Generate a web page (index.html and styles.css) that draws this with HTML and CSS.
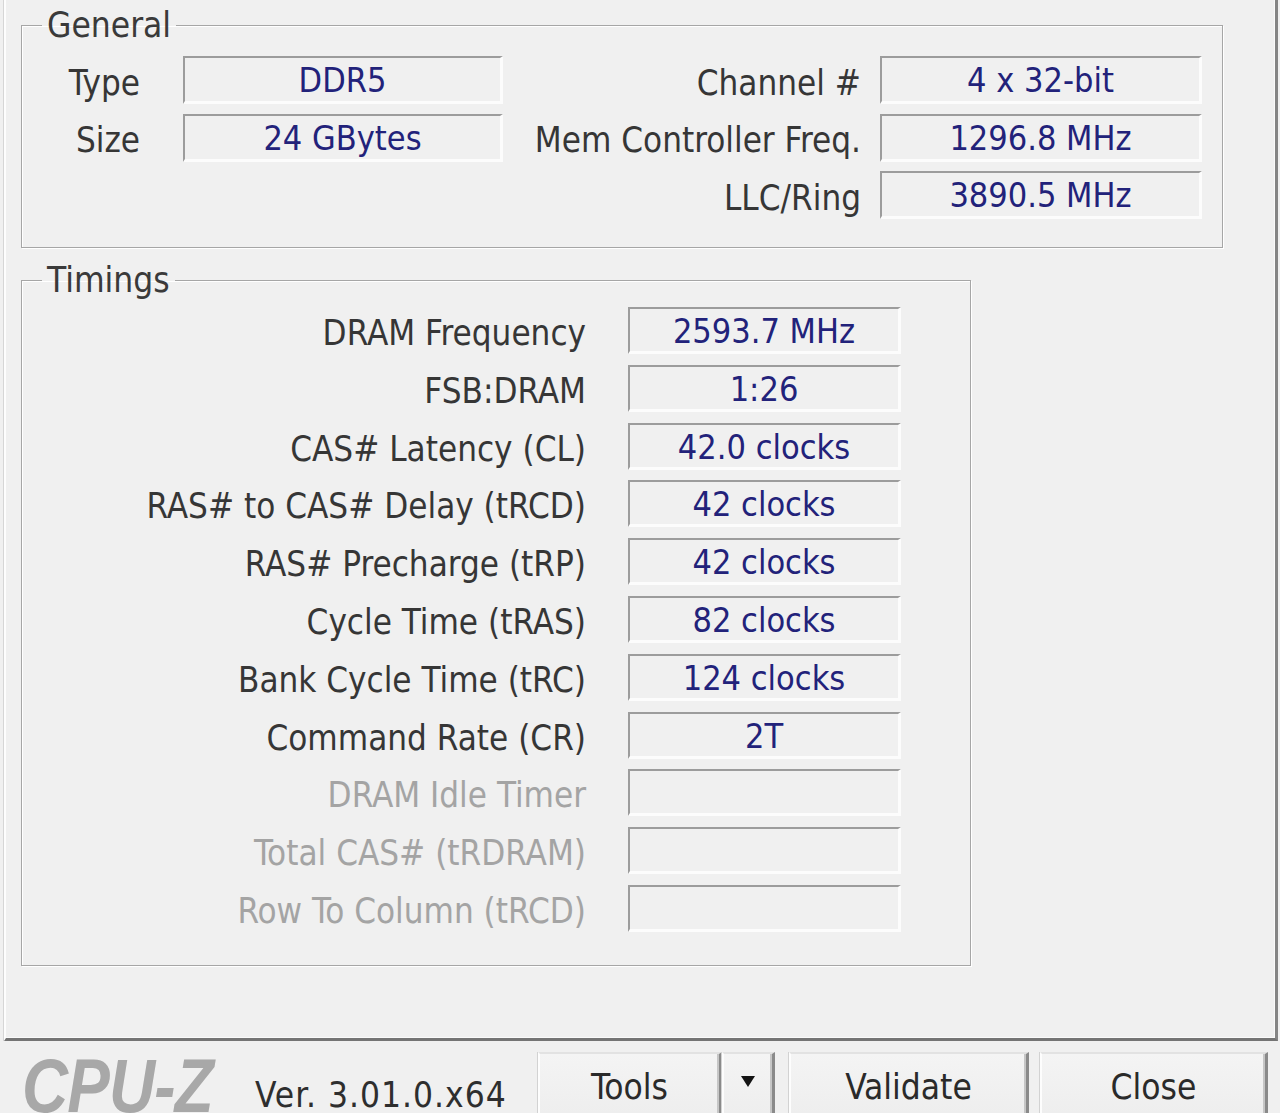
FILE: index.html
```html
<html>
  <head>
    <meta charset="UTF-8" />
    <title>CPU-Z</title>
    <link rel="stylesheet" href="styles.css">
  </head>
  <body>
    <div class="tab">
      <fieldset class="group general">
        <legend>General</legend>
        <div class="rows general-rows">
          <span class="lbl first">Type</span>
          <span class="val">DDR5</span>
          <span class="lbl second">Channel #</span>
          <span class="val">4 x 32-bit</span>

          <span class="lbl first">Size</span>
          <span class="val">24 GBytes</span>
          <span class="lbl second">Mem Controller Freq.</span>
          <span class="val">1296.8 MHz</span>

          <span class="lbl first"></span>
          <span></span>
          <span class="lbl second">LLC/Ring</span>
          <span class="val">3890.5 MHz</span>
        </div>
      </fieldset>

      <fieldset class="group timings">
        <legend>Timings</legend>
        <div class="rows timing-rows">
          <span class="lbl">DRAM Frequency</span>        <span class="val">2593.7 MHz</span>
          <span class="lbl">FSB:DRAM</span>              <span class="val">1:26</span>
          <span class="lbl">CAS# Latency (CL)</span>     <span class="val">42.0 clocks</span>
          <span class="lbl">RAS# to CAS# Delay (tRCD)</span> <span class="val">42 clocks</span>
          <span class="lbl">RAS# Precharge (tRP)</span>  <span class="val">42 clocks</span>
          <span class="lbl">Cycle Time (tRAS)</span>     <span class="val">82 clocks</span>
          <span class="lbl">Bank Cycle Time (tRC)</span> <span class="val">124 clocks</span>
          <span class="lbl">Command Rate (CR)</span>     <span class="val">2T</span>
          <span class="lbl off">DRAM Idle Timer</span>    <span class="val"></span>
          <span class="lbl off">Total CAS# (tRDRAM)</span> <span class="val"></span>
          <span class="lbl off">Row To Column (tRCD)</span> <span class="val"></span>
        </div>
      </fieldset>
    </div>

    <div class="footer">
      <span class="logo">CPU-Z</span>
      <span class="version">Ver. 3.01.0.x64</span>
      <div class="buttons">
        <button class="btn tools">Tools</button>
        <button class="btn arrow"><span class="tri"></span></button>
        <button class="btn validate">Validate</button>
        <button class="btn close">Close</button>
      </div>
    </div>
  </body>
</html>
```
FILE: styles.css
```css
* { box-sizing: border-box; }
html, body {
  margin: 0; width: 100%; height: 100%; overflow: hidden;
}
body {
  background-color: #f0f0f0; color: #333;
  font-family: "DejaVu Sans Condensed", "DejaVu Sans", sans-serif;
  font-stretch: condensed; font-size: 34px;
}

/* tab page: light left edge, dark right and bottom edge */
.tab {
  margin-left: 4px; width: 1274px; height: 1041px;
  border-left: 2px solid #fdfdfd;
  border-right: 3px solid #858585;
  border-bottom: 3px solid #747474;
  box-shadow: -1px 0 0 #d6d6d6, inset -1px 0 0 #fafafa, inset 0 -1px 0 #fafafa;
  padding-left: 15px; padding-top: 7px;
}

/* etched group box */
.group {
  margin: 0; padding: 0; min-width: 0;
  border: 1px solid #a6a6a6;
  box-shadow: inset 1px 1px 0 #fff, 1px 1px 0 #fff;
}
.group > legend {
  margin-left: 20px; padding: 0 5px;
  font-size: 35px; line-height: 36px; color: #3a3a3a;
}
.general { width: 1202px; padding-top: 13px; padding-bottom: 28px; }
.timings { width: 950px; margin-top: 14px; padding-top: 9px; padding-bottom: 33px; }

.rows { display: grid; align-items: center; }
.general-rows {
  grid-template-columns: 161px 320px 1fr 322px;
  grid-auto-rows: 48px; row-gap: 9.5px;
  padding-right: 20px;
}
.timing-rows {
  grid-template-columns: 1fr 273px;
  grid-auto-rows: 47px; row-gap: 10.8px;
  padding-right: 69px;
}

.lbl {
  text-align: right; white-space: nowrap; color: #363636;
  font-size: 34.7px; padding-top: 5px;
}
.general-rows .first { padding-right: 43px; }
.general-rows .second { padding-right: 19px; }
.timing-rows .lbl { padding-right: 42px; }
.lbl.off { color: #a4a4a4; }

/* sunken read-only value field */
.val {
  height: 100%; text-align: center; white-space: nowrap;
  color: #22227a; line-height: 44px;
  border-style: solid; border-width: 2px 3px 3px 2px;
  border-color: #9c9c9c #fcfcfc #fcfcfc #9c9c9c;
}

/* bottom bar */
.footer {
  display: flex; align-items: flex-start;
  padding-left: 22px; height: 72px; overflow: hidden;
}
.logo {
  flex: 0 0 233px; margin-top: 13px;
  font-family: "Liberation Sans", Arial, sans-serif;
  font-weight: bold; font-style: italic; font-size: 76px; line-height: 64px;
  color: #a8a8a8; letter-spacing: -1px;
  transform: scaleX(.84); transform-origin: left top;
}
.version {
  flex: 0 0 283px; margin-top: 39px; line-height: 30px;
  font-size: 35px; letter-spacing: 1px; color: #2e2e2e;
}
.buttons { display: flex; margin-top: 11px; }
.btn {
  height: 80px; padding: 0; margin: 0;
  font: inherit; font-stretch: condensed; font-size: 35px; color: #2a2a2a;
  background: linear-gradient(#f4f4f4, #ececec);
  border-style: solid; border-width: 2px 3px 0 2px;
  border-color: #e2e2e2 #8a8a8a #8a8a8a #fdfdfd;
  box-shadow: inset -2px 0 0 #c6c6c6, -1px 0 0 #d2d2d2;
  display: flex; justify-content: center; align-items: flex-start;
  padding-top: 11px; line-height: 44px;
}
.tools { width: 184px; }
.arrow { width: 53px; padding-top: 22px; }
.validate { width: 240px; margin-left: 14px; }
.close { width: 228px; margin-left: 11px; }
.tri {
  width: 0; height: 0;
  border-left: 7px solid transparent; border-right: 7px solid transparent;
  border-top: 11px solid #141414;
}
```
